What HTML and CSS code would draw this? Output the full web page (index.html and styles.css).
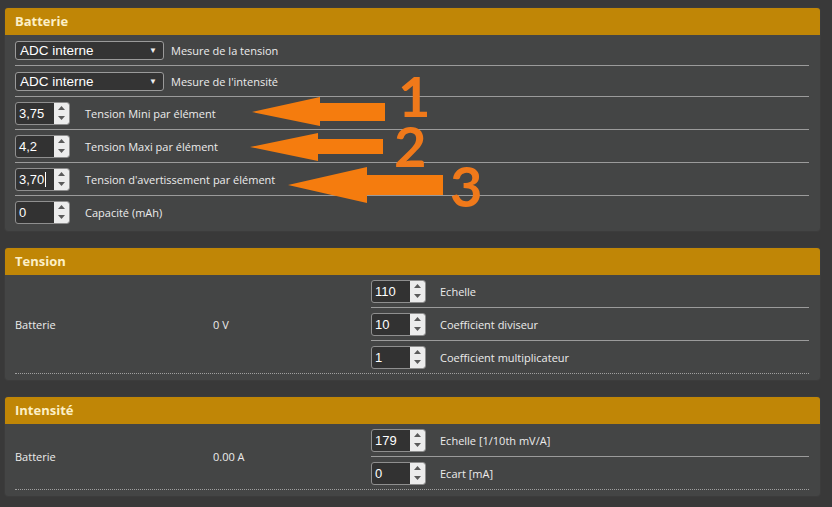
FILE: index.html
```html
<!DOCTYPE html>
<html lang="fr">
<head>
<meta charset="utf-8">
<title>Batterie</title>
<link rel="stylesheet" href="styles.css">
</head>
<body>
<div class="page">
  <section class="panel">
    <h2 class="panel-head">Batterie</h2>
    <div class="plist">
      <div class="row sel-row">
        <div class="select"><span>ADC interne</span><span class="caret">&#9660;</span></div>
        <span class="lbl sel-lbl">Mesure de la tension</span>
      </div>
      <div class="row sel-row">
        <div class="select"><span>ADC interne</span><span class="caret">&#9660;</span></div>
        <span class="lbl sel-lbl">Mesure de l'intensité</span>
      </div>
      <div class="row num-row">
        <div class="num"><span class="val">3,75</span><span class="spin"><svg viewBox="0 0 15 22" width="15" height="22"><polygon points="4,8 11,8 7.5,4" /><polygon points="4,14 11,14 7.5,18" /></svg></span></div>
        <span class="lbl">Tension Mini par élément</span>
      </div>
      <div class="row num-row">
        <div class="num"><span class="val">4,2</span><span class="spin"><svg viewBox="0 0 15 22" width="15" height="22"><polygon points="4,8 11,8 7.5,4" /><polygon points="4,14 11,14 7.5,18" /></svg></span></div>
        <span class="lbl">Tension Maxi par élément</span>
      </div>
      <div class="row num-row">
        <div class="num"><span class="val">3,70<i class="cursor"></i></span><span class="spin"><svg viewBox="0 0 15 22" width="15" height="22"><polygon points="4,8 11,8 7.5,4" /><polygon points="4,14 11,14 7.5,18" /></svg></span></div>
        <span class="lbl">Tension d'avertissement par élément</span>
      </div>
      <div class="row num-row last">
        <div class="num"><span class="val">0</span><span class="spin"><svg viewBox="0 0 15 22" width="15" height="22"><polygon points="4,8 11,8 7.5,4" /><polygon points="4,14 11,14 7.5,18" /></svg></span></div>
        <span class="lbl">Capacité (mAh)</span>
      </div>
    </div>
  </section>

  <section class="panel">
    <h2 class="panel-head">Tension</h2>
    <div class="tbl">
      <span class="cell">Batterie</span>
      <span class="cell">0 V</span>
      <div class="sub">
        <div class="row num-row">
          <div class="num"><span class="val">110</span><span class="spin"><svg viewBox="0 0 15 22" width="15" height="22"><polygon points="4,8 11,8 7.5,4" /><polygon points="4,14 11,14 7.5,18" /></svg></span></div>
          <span class="lbl">Echelle</span>
        </div>
        <div class="row num-row">
          <div class="num"><span class="val">10</span><span class="spin"><svg viewBox="0 0 15 22" width="15" height="22"><polygon points="4,8 11,8 7.5,4" /><polygon points="4,14 11,14 7.5,18" /></svg></span></div>
          <span class="lbl">Coefficient diviseur</span>
        </div>
        <div class="row num-row last">
          <div class="num"><span class="val">1</span><span class="spin"><svg viewBox="0 0 15 22" width="15" height="22"><polygon points="4,8 11,8 7.5,4" /><polygon points="4,14 11,14 7.5,18" /></svg></span></div>
          <span class="lbl">Coefficient multiplicateur</span>
        </div>
      </div>
    </div>
  </section>

  <section class="panel">
    <h2 class="panel-head">Intensité</h2>
    <div class="tbl">
      <span class="cell">Batterie</span>
      <span class="cell">0.00 A</span>
      <div class="sub">
        <div class="row num-row">
          <div class="num"><span class="val">179</span><span class="spin"><svg viewBox="0 0 15 22" width="15" height="22"><polygon points="4,8 11,8 7.5,4" /><polygon points="4,14 11,14 7.5,18" /></svg></span></div>
          <span class="lbl">Echelle [1/10th mV/A]</span>
        </div>
        <div class="row num-row last">
          <div class="num"><span class="val">0</span><span class="spin"><svg viewBox="0 0 15 22" width="15" height="22"><polygon points="4,8 11,8 7.5,4" /><polygon points="4,14 11,14 7.5,18" /></svg></span></div>
          <span class="lbl">Ecart [mA]</span>
        </div>
      </div>
    </div>
  </section>

  <svg class="arrows" viewBox="0 0 832 507" width="832" height="507">
    <polygon points="385,103 320,103 320,97 252,112 320,126 320,121 385,121" />
    <polygon points="383,139 318,139 318,133 250,147 318,161 318,154 383,154" />
    <polygon points="443,175 367,175 367,167 288,185 367,203 367,195 443,195" />
    <text x="398" y="117">1</text>
    <text x="394" y="167">2</text>
    <text x="450" y="207">3</text>
  </svg>
</div>
</body>
</html>
```

FILE: styles.css
```css
html, body {
  margin: 0;
  padding: 0;
}

body {
  background: #393939;
  font-family: "Open Sans", "DejaVu Sans", sans-serif;
  color: #ececec;
  width: 832px;
  height: 507px;
  overflow: hidden;
}

.page {
  position: relative;
  padding: 7px 11px 0 4px;
  display: flex;
  flex-direction: column;
  gap: 15px;
}

.panel {
  background: #444545;
  border: 1px solid #3c3c3c;
  border-radius: 4px;
}

.panel-head {
  margin: 0;
  height: 27px;
  line-height: 27px;
  background: #c08606;
  color: #fcefc7;
  font-size: 13px;
  font-weight: 700;
  padding-left: 10px;
  border-radius: 3px 3px 0 0;
}

.plist {
  padding: 0 11px 3px 10px;
}

.row {
  display: flex;
  align-items: center;
  border-bottom: 1px solid #9b9b9b;
}

.row.last {
  border-bottom: none;
}

.sel-row {
  height: 30px;
}

.num-row {
  height: 32px;
}

.select {
  box-sizing: border-box;
  width: 149px;
  height: 19px;
  border: 1px solid #9a9a9a;
  border-radius: 3px;
  background: #343434;
  display: flex;
  align-items: center;
  justify-content: space-between;
  padding: 0 6px 0 4px;
  font-family: "Liberation Sans", Arial, sans-serif;
  font-size: 13.5px;
  color: #ffffff;
}

.caret {
  font-size: 8px;
  color: #f0f0f0;
}

.lbl {
  font-size: 11px;
  color: #ececec;
  margin-left: 15px;
}

.sel-lbl {
  margin-left: 7px;
}

.num {
  box-sizing: border-box;
  width: 55px;
  height: 23px;
  border: 1px solid #8f8f8f;
  border-radius: 3px;
  background: #323232;
  display: flex;
  overflow: hidden;
}

.val {
  flex: 1;
  display: flex;
  align-items: center;
  padding-left: 3px;
  font-family: "Liberation Sans", Arial, sans-serif;
  font-size: 13px;
  color: #ffffff;
}

.cursor {
  display: inline-block;
  width: 1px;
  height: 15px;
  background: #ffffff;
  margin-left: 1px;
}

.spin {
  width: 15px;
  background: #ececec;
  display: flex;
  align-items: center;
}

.spin svg {
  display: block;
  fill: #5a5a5a;
}

.tbl {
  display: grid;
  grid-template-columns: 198px 158px 1fr;
  margin: 0 11px 6px 10px;
  border-bottom: 1px dotted #a0a0a0;
}

.cell {
  align-self: center;
  font-size: 11px;
  color: #ececec;
}

.sub .lbl {
  margin-left: 14px;
}

.arrows {
  position: absolute;
  left: 0;
  top: 0;
  pointer-events: none;
  fill: #f57c0e;
}

.arrows text {
  font-family: Lato, "DejaVu Sans", sans-serif;
  font-weight: 700;
  font-size: 56px;
  fill: #f0791a;
}
```
